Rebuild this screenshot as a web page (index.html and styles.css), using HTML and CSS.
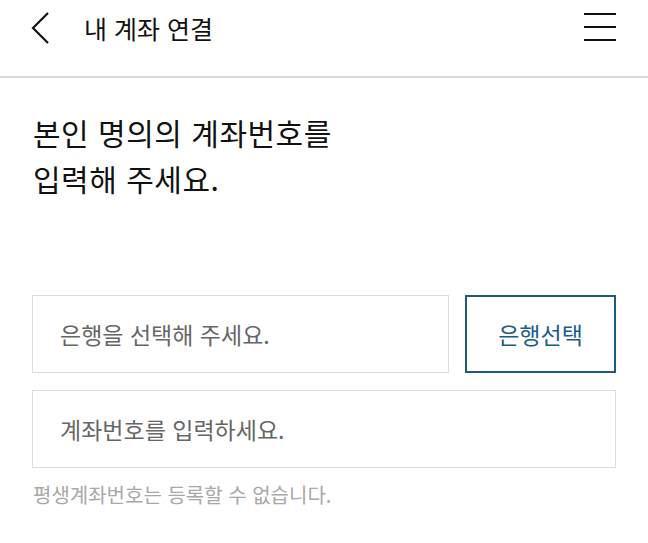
FILE: index.html
```html
<!DOCTYPE html>
<html lang="ko">
<head>
<meta charset="utf-8">
<title>내 계좌 연결</title>
<link rel="stylesheet" href="styles.css">
</head>
<body>
<header class="topbar">
  <div class="topbar-left">
    <button class="icon-btn back" aria-label="뒤로">
      <svg width="20" height="32" viewBox="0 0 20 32"><polyline points="17,1 2,16 17,31" fill="none" stroke="#111" stroke-width="2.2" stroke-linejoin="miter"/></svg>
    </button>
    <h1 class="title">내 계좌 연결</h1>
  </div>
  <button class="icon-btn menu" aria-label="메뉴">
    <span class="bar"></span><span class="bar"></span><span class="bar"></span>
  </button>
</header>
<main class="content">
  <h2 class="heading">본인 명의의 계좌번호를<br>입력해 주세요.</h2>
  <div class="form">
    <div class="row">
      <div class="field bank">은행을 선택해 주세요.</div>
      <button class="select-btn">은행선택</button>
    </div>
    <div class="field account">계좌번호를 입력하세요.</div>
    <p class="note">평생계좌번호는 등록할 수 없습니다.</p>
  </div>
</main>
</body>
</html>
```
FILE: styles.css
```css
* { box-sizing: border-box; }
body {
  margin: 0;
  background: #fff;
  font-family: "Noto Sans CJK KR", "Noto Sans", sans-serif;
  color: #111;
}
.topbar {
  height: 78px;
  border-bottom: 2px solid #d9d9d9;
  display: flex;
  align-items: flex-start;
  justify-content: space-between;
  padding: 0 32px 0 31px;
}
.topbar-left {
  display: flex;
  align-items: center;
  height: 55px;
}
.icon-btn {
  background: none;
  border: 0;
  padding: 0;
  margin: 0;
  cursor: pointer;
}
.back {
  display: block;
  width: 20px;
  height: 32px;
  margin-top: 0;
}
.back svg { display: block; }
.title {
  margin: 0 0 0 33px;
  font-size: 25px;
  font-weight: 400;
  line-height: 30px;
  color: #111;
}
.menu {
  margin-top: 13px;
  width: 32px;
  display: flex;
  flex-direction: column;
  gap: 11px;
}
.menu .bar {
  display: block;
  height: 2px;
  width: 32px;
  background: #111;
}
.content {
  padding: 31px 32px 0 32px;
}
.heading {
  margin: 0 0 0 1px;
  font-size: 30px;
  font-weight: 400;
  line-height: 46px;
  letter-spacing: 0.5px;
  color: #111;
}
.form {
  margin-top: 94px;
}
.row {
  display: flex;
  gap: 16px;
}
.field {
  height: 78px;
  border: 1px solid #dcdcdc;
  display: flex;
  align-items: center;
  padding-left: 27px;
  font-size: 23px;
  color: #666;
}
.field.bank { width: 417px; }
.field.account {
  margin-top: 17px;
  width: 100%;
}
.select-btn {
  flex: 1;
  height: 78px;
  border: 2px solid #1d5a80;
  background: #fff;
  color: #1b5c86;
  font-family: inherit;
  font-size: 23px;
  padding: 0;
}
.note {
  margin: 14px 0 0 1px;
  font-size: 20px;
  line-height: 26px;
  color: #a8a8a8;
}
```
